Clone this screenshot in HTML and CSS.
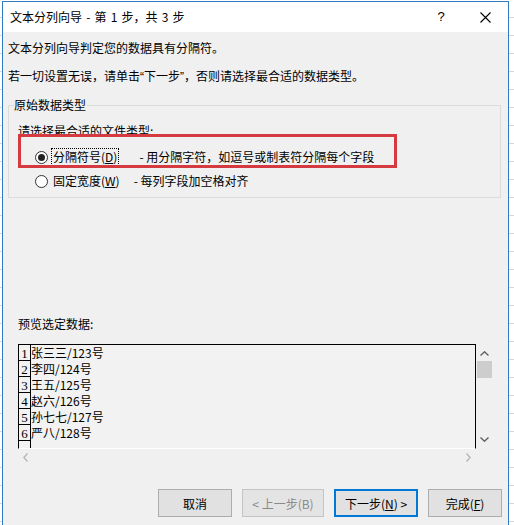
FILE: index.html
```html
<!DOCTYPE html>
<html lang="zh-CN">
<head>
<meta charset="utf-8">
<title>文本分列向导</title>
<link rel="stylesheet" href="styles.css">
</head>
<body>
<div class="dialog">
  <div class="titlebar">
    <span class="title">文本分列向导 - 第 1 步，共 3 步</span>
    <span class="help">?</span>
    <span class="close"><svg width="11" height="11" viewBox="0 0 11 11"><path d="M0.5 0.5L10.5 10.5M10.5 0.5L0.5 10.5" stroke="#000" stroke-width="1.1" fill="none"/></svg></span>
  </div>
  <div class="content">
    <p class="line">文本分列向导判定您的数据具有分隔符。</p>
    <p class="line second">若一切设置无误，请单击<span class="q">“</span>下一步<span class="q">”</span>，否则请选择最合适的数据类型。</p>
    <fieldset class="group">
      <legend class="legend">原始数据类型</legend>
      <div class="hint">请选择最合适的文件类型:</div>
      <div class="opt opt1">
        <span class="radio on"></span>
        <span class="lbl focus">分隔符号(<u>D</u>)</span>
        <span class="desc d1">- 用分隔字符，如逗号或制表符分隔每个字段</span>
        <span class="mark"></span>
      </div>
      <div class="opt opt2">
        <span class="radio"></span>
        <span class="lbl">固定宽度(<u>W</u>)</span>
        <span class="desc d2">- 每列字段加空格对齐</span>
      </div>
    </fieldset>
    <div class="plabel">预览选定数据:</div>
    <div class="preview">
      <div class="data">
        <div class="row"><span class="num">1</span><span class="txt">张三三/123号</span></div>
        <div class="row"><span class="num">2</span><span class="txt">李四/124号</span></div>
        <div class="row"><span class="num">3</span><span class="txt">王五/125号</span></div>
        <div class="row"><span class="num">4</span><span class="txt">赵六/126号</span></div>
        <div class="row"><span class="num">5</span><span class="txt">孙七七/127号</span></div>
        <div class="row"><span class="num">6</span><span class="txt">严八/128号</span></div>
        <div class="row"><span class="num"></span><span class="txt"></span></div>
      </div>
      <div class="vscroll">
        <svg class="up" width="9" height="5" viewBox="0 0 9 5"><path d="M0.5 4.5L4.5 0.8L8.5 4.5" stroke="#606060" stroke-width="1.4" fill="none"/></svg>
        <div class="thumb"></div>
        <svg class="down" width="9" height="5" viewBox="0 0 9 5"><path d="M0.5 0.5L4.5 4.2L8.5 0.5" stroke="#606060" stroke-width="1.4" fill="none"/></svg>
      </div>
      <div class="hscroll">
        <svg width="5" height="9" viewBox="0 0 5 9"><path d="M4.5 0.5L0.8 4.5L4.5 8.5" stroke="#b4b4b4" stroke-width="1.3" fill="none"/></svg>
        <svg width="5" height="9" viewBox="0 0 5 9"><path d="M0.5 0.5L4.2 4.5L0.5 8.5" stroke="#b4b4b4" stroke-width="1.3" fill="none"/></svg>
      </div>
      <div class="corner"></div>
    </div>
    <div class="buttons">
      <button class="btn w74">取消</button>
      <button class="btn w82 disabled">&lt; 上一步(B)</button>
      <button class="btn w84 default">下一步(<u>N</u>) &gt;</button>
      <button class="btn w74">完成(<u>F</u>)</button>
    </div>
  </div>
</div>
</body>
</html>
```
FILE: styles.css
```css
html, body {
  margin: 0;
  padding: 0;
}
body {
  width: 514px;
  height: 525px;
  overflow: hidden;
  background: #fff repeating-linear-gradient(to bottom, transparent 0 17px, #d6d6d6 17px 18px);
  font-family: "Noto Sans CJK SC", "Microsoft YaHei", sans-serif;
  font-size: 12px;
  color: #000;
}
.dialog {
  margin: 1px 0 0 2px;
  width: 507px;
  height: 524px;
  box-sizing: border-box;
  border: 1px solid #2f7cc2;
  border-bottom: none;
  background: #f0f0f0;
}
.titlebar {
  height: 30px;
  background: #fff;
  display: flex;
  align-items: center;
  padding: 0 13px 0 7px;
}
.title {
  line-height: 16px;
  word-spacing: 1.5px;
}
.help {
  margin-left: auto;
  width: 20px;
  text-align: center;
  line-height: 16px;
  font-family: "Liberation Sans", sans-serif;
  font-size: 13px;
}
.close {
  margin-left: 24px;
  width: 20px;
  height: 11px;
  display: flex;
  justify-content: center;
}
.content {
  padding: 8px 6px 0 5px;
}
.line {
  margin: 0;
  line-height: 16px;
}
.second {
  margin-top: 12px;
}
.q {
  font-family: "Liberation Sans", sans-serif;
}
.group {
  margin: 12px 1px 0 0;
  padding: 0 0 7px 5px;
  border: 1px solid #dcdcdc;
  min-width: 0;
  position: relative;
}
.legend {
  padding: 0 1px 0 0;
  margin: 0;
  line-height: 16px;
}
.hint {
  margin: 10px 0 0 4px;
  line-height: 16px;
}
.opt {
  display: flex;
  align-items: center;
  height: 18px;
  margin-left: 21px;
}
.opt1 {
  margin-top: 9px;
  position: relative;
}
.opt2 {
  margin-top: 6px;
}
.radio {
  width: 13px;
  height: 13px;
  box-sizing: border-box;
  border: 1px solid #333;
  border-radius: 50%;
  background: #fff;
  display: flex;
  align-items: center;
  justify-content: center;
}
.radio.on::after {
  content: "";
  width: 7px;
  height: 7px;
  border-radius: 50%;
  background: #222;
}
.lbl {
  margin-left: 3px;
  padding: 0 1px;
  line-height: 16px;
  border: 1px solid transparent;
}
.lbl.focus {
  border: 1px dotted #000;
}
.desc {
  line-height: 16px;
}
.d1 {
  margin-left: 20px;
}
.d2 {
  margin-left: 12px;
}
.mark {
  position: absolute;
  left: -17px;
  top: -14px;
  width: 379px;
  height: 34px;
  box-sizing: border-box;
  border: 3px solid #d63a41;
  pointer-events: none;
}
.plabel {
  margin: 118px 0 0 10px;
  line-height: 16px;
}
.preview {
  margin: 12px 0 0 10px;
  width: 475px;
  display: grid;
  grid-template-columns: 458px 17px;
  grid-template-rows: 105px 16px;
}
.data {
  box-sizing: border-box;
  border: 1px solid #000;
  border-bottom-color: #fff;
  background: #f2f2f2;
  overflow: hidden;
}
.row {
  display: flex;
  height: 16px;
  line-height: 16px;
}
.num {
  width: 12px;
  flex: none;
  box-sizing: border-box;
  border-right: 1px solid #000;
  border-bottom: 1px solid #000;
  text-align: center;
  font-family: "Liberation Serif", serif;
  font-size: 13px;
  line-height: 18px;
  overflow: hidden;
}
.txt {
  font-size: 12px;
  line-height: 16px;
}
.vscroll {
  display: flex;
  flex-direction: column;
  align-items: center;
  background: #f0f0f0;
}
.up {
  margin-top: 7px;
}
.thumb {
  width: 15px;
  height: 17px;
  margin-top: 5px;
  background: #cdcdcd;
}
.down {
  margin-top: auto;
  margin-bottom: 7px;
}
.hscroll {
  display: flex;
  justify-content: space-between;
  align-items: center;
  padding: 0 5px;
  background: #f0f0f0;
}
.buttons {
  display: flex;
  justify-content: flex-end;
  gap: 10px;
  margin-top: 24px;
}
.btn {
  height: 28px;
  box-sizing: border-box;
  border: 1px solid #adadad;
  background: #e1e1e1;
  font-family: "Noto Sans CJK SC", sans-serif;
  font-size: 12px;
  color: #000;
  padding: 0;
  display: flex;
  align-items: center;
  justify-content: center;
}
.w74 { width: 74px; }
.w82 { width: 82px; }
.w84 { width: 84px; }
.btn.disabled {
  color: #8a8a8a;
  border-color: #c4c4c4;
  background: #e4e4e4;
}
.btn.default {
  border: 2px solid #0078d7;
}
```
